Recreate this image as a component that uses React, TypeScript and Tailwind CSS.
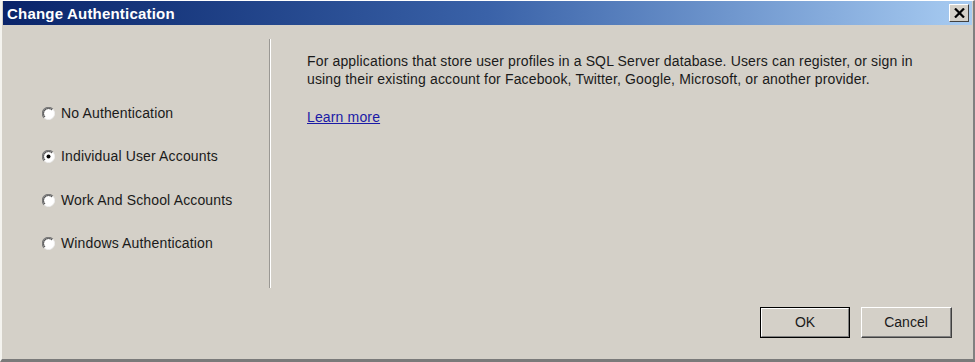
import React from "react";

function Radio({ checked }: { checked?: boolean }) {
  return (
    <svg width="13" height="13" viewBox="0 0 13 13" className="shrink-0">
      <circle cx="6.5" cy="6.5" r="6" fill="#ffffff" />
      <path d="M 2.2 10.8 A 6 6 0 0 1 10.8 2.2" stroke="#7a7a7a" strokeWidth="1.4" fill="none" />
      <path d="M 3 10 A 4.9 4.9 0 0 1 10 3" stroke="#404040" strokeWidth="1" fill="none" />
      <path d="M 10.8 2.2 A 6 6 0 0 1 2.2 10.8" stroke="#eeeeee" strokeWidth="1" fill="none" />
      {checked && <circle cx="6.5" cy="6.5" r="2" fill="#000000" />}
    </svg>
  );
}

function RadioItem({ label, checked }: { label: string; checked?: boolean }) {
  return (
    <div className="flex items-center gap-[6px] h-[20px] text-[14px] tracking-[0.15px] text-[#1a1a1a]">
      <Radio checked={checked} />
      <span>{label}</span>
    </div>
  );
}

export default function App() {
  return (
    <div
      className="w-[975px] h-[362px] bg-[#d4d0c8] flex flex-col border-t border-l-2 border-r-2 border-b-[3px] border-t-white border-l-[#f4f3ef] border-r-[#808080] border-b-[#7a7a7a]"
      style={{ fontFamily: '"Liberation Sans", Arial, sans-serif' }}
    >
      <div className="h-[24px] mx-[1px] flex items-center justify-between pl-[4px] pr-[3px] bg-gradient-to-r from-[#0a246a] via-[#3a62a8] to-[#a8ccf2]">
        <span className="text-white font-bold text-[15px] leading-none tracking-[0.2px]">Change Authentication</span>
        <div className="w-[20px] h-[18px] bg-[#d4d0c8] border-t border-l border-t-white border-l-white border-r border-b border-r-[#404040] border-b-[#404040] flex items-center justify-center">
          <svg width="11" height="10" viewBox="0 0 11 10">
            <path d="M1 0.5 L10 9.5 M10 0.5 L1 9.5" stroke="#000" strokeWidth="2.2" />
          </svg>
        </div>
      </div>
      <div className="mt-[14px] h-[249px] flex">
        <div className="w-[267px] pl-[40px] pt-[64px] flex flex-col gap-[23.5px]">
          <RadioItem label="No Authentication" />
          <RadioItem label="Individual User Accounts" checked />
          <RadioItem label="Work And School Accounts" />
          <RadioItem label="Windows Authentication" />
        </div>
        <div className="w-[2px] h-full border-l border-l-[#9a9894] border-r border-r-white" />
        <div className="flex-1 pl-[36px] pt-[13px] pr-[20px] text-[14px] tracking-[0.15px] text-[#1a1a1a] leading-[18px]">
          <p className="whitespace-nowrap">
            For applications that store user profiles in a SQL Server database. Users can register, or sign in
            <br />
            using their existing account for Facebook, Twitter, Google, Microsoft, or another provider.
          </p>
          <a className="inline-block mt-[20px] text-[#1a1aa6] underline">Learn more</a>
        </div>
      </div>
      <div className="mt-[19px] flex justify-end gap-[11px] pr-[21px]">
        <button className="w-[90px] h-[31px] border border-black bg-[#d4d0c8] p-0">
          <div className="w-full h-full border-t border-l border-t-white border-l-white border-r border-b border-r-[#808080] border-b-[#808080] flex items-center justify-center text-[14px] text-[#1a1a1a]">
            OK
          </div>
        </button>
        <button className="w-[91px] h-[31px] bg-[#d4d0c8] border-t border-l border-t-white border-l-white border-r border-b border-r-[#404040] border-b-[#404040] p-0">
          <div className="w-full h-full border-r border-b border-r-[#808080] border-b-[#808080] flex items-center justify-center text-[14px] text-[#1a1a1a]">
            Cancel
          </div>
        </button>
      </div>
    </div>
  );
}
